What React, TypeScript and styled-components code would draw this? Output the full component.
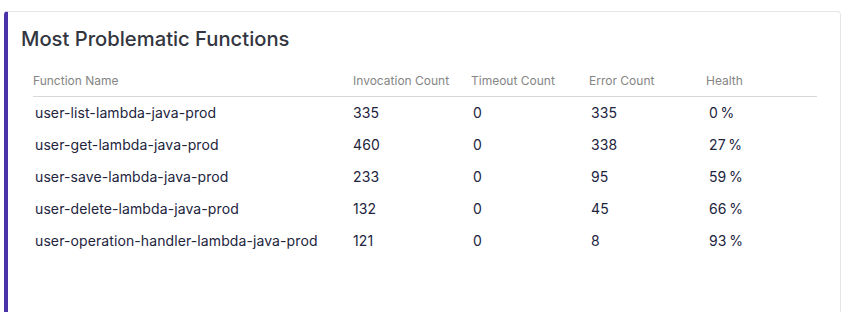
import styled, { createGlobalStyle } from "styled-components";

const GlobalStyle = createGlobalStyle`
  body {
    margin: 0;
    background: #ffffff;
    font-family: Inter, "Liberation Sans", sans-serif;
  }
`;

const Page = styled.div`
  padding: 11px 8px 0 4px;
  height: 312px;
  box-sizing: border-box;
  overflow: hidden;
`;

const Card = styled.section`
  background: #ffffff;
  border: 1px solid #e6e6e6;
  border-left: 4px solid #4a32a8;
  border-radius: 4px;
  height: 330px;
  box-sizing: border-box;
  padding: 14px 23px 0 13px;
`;

const Title = styled.h2`
  margin: 0 0 21px 0;
  font-size: 20.2px;
  font-weight: 500;
  color: #333640;
`;

const Table = styled.div`
  margin-left: 12px;
`;

const Row = styled.div<{ $header?: boolean }>`
  display: grid;
  grid-template-columns: 320px 118px 118px 117px 1fr;
  align-items: center;
  height: ${(p) => (p.$header ? "24px" : "32px")};
  border-bottom: ${(p) => (p.$header ? "1px solid #d8d8d8" : "none")};
  margin-top: ${(p) => (p.$header ? "0" : "-1px")};
  margin-bottom: ${(p) => (p.$header ? "0" : "1px")};
`;

const HeadCell = styled.div`
  font-size: 12px;
  color: #858585;
  padding-bottom: 8px;
`;

const Cell = styled.div<{ $indent?: number }>`
  font-size: 14px;
  letter-spacing: 0.1px;
  color: #22243d;
  padding-left: ${(p) => p.$indent ?? 0}px;
`;

const rows = [
  { name: "user-list-lambda-java-prod", inv: 335, timeout: 0, err: 335, health: 0 },
  { name: "user-get-lambda-java-prod", inv: 460, timeout: 0, err: 338, health: 27 },
  { name: "user-save-lambda-java-prod", inv: 233, timeout: 0, err: 95, health: 59 },
  { name: "user-delete-lambda-java-prod", inv: 132, timeout: 0, err: 45, health: 66 },
  { name: "user-operation-handler-lambda-java-prod", inv: 121, timeout: 0, err: 8, health: 93 },
];

export default function App() {
  return (
    <>
      <GlobalStyle />
      <Page>
        <Card>
          <Title>Most Problematic Functions</Title>
          <Table>
            <Row $header>
              <HeadCell>Function Name</HeadCell>
              <HeadCell>Invocation Count</HeadCell>
              <HeadCell>Timeout Count</HeadCell>
              <HeadCell>Error Count</HeadCell>
              <HeadCell>Health</HeadCell>
            </Row>
            {rows.map((r) => (
              <Row key={r.name}>
                <Cell $indent={2}>{r.name}</Cell>
                <Cell>{r.inv}</Cell>
                <Cell $indent={2}>{r.timeout}</Cell>
                <Cell $indent={2}>{r.err}</Cell>
                <Cell $indent={3}>{r.health}&thinsp;%</Cell>
              </Row>
            ))}
          </Table>
        </Card>
      </Page>
    </>
  );
}
